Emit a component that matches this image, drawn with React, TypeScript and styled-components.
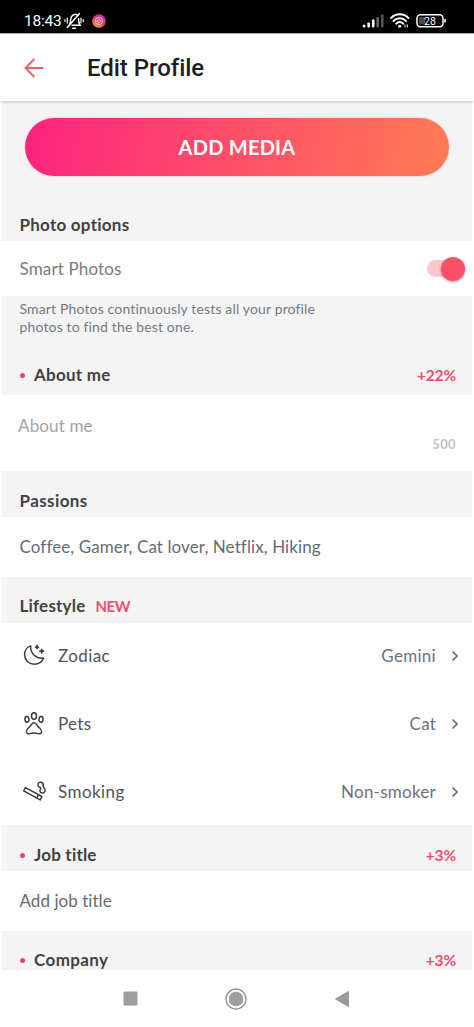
import React from 'react';
import styled, { createGlobalStyle } from 'styled-components';

const GlobalStyle = createGlobalStyle`
  * { box-sizing: border-box; }
  body {
    margin: 0;
    background: #fff;
    font-family: Lato, "Liberation Sans", sans-serif;
    font-variant-ligatures: none;
  }
`;

const Screen = styled.div`
  width: 474px;
  height: 1027px;
  display: flex;
  flex-direction: column;
  overflow: hidden;
  background: #fff;
`;

const StatusBar = styled.div`
  height: 33px;
  flex: none;
  display: flex;
  align-items: flex-start;
  justify-content: space-between;
  padding: 12px 28px 0 24px;
  background: #000;
  color: #fff;
`;

const StatusGroup = styled.div`
  display: flex;
  align-items: center;
  height: 18px;
`;

const Clock = styled.span`
  font: 400 15.5px/18px Roboto, sans-serif;
  letter-spacing: -0.25px;
  width: 40px;
  white-space: nowrap;
`;

const Header = styled.header`
  position: relative;
  height: 68px;
  flex: none;
  display: flex;
  align-items: center;
  padding: 1px 0 0 24px;
  background: #fff;
  border-top: 1px solid #aaa;
  box-shadow: 0 1px 3px rgba(0, 0, 0, 0.2);
`;

const BackArrow = styled.svg`
  width: 20px;
  height: 20px;
  margin-bottom: 1px;
  fill: none;
  stroke: #e96667;
  stroke-width: 2;
`;

const Title = styled.h1`
  margin: 0 0 0 43px;
  font: 500 24px/30px Roboto, sans-serif;
  letter-spacing: -0.04px;
  color: #1d1d1f;
`;

const Content = styled.main`
  height: 869px;
  flex: none;
  overflow: hidden;
  margin: 0 2px;
  background: #f4f4f4;
`;

const MediaArea = styled.div`
  padding: 17px 23px 0;
  height: 94px;
`;

const MediaButton = styled.button`
  display: flex;
  align-items: center;
  justify-content: center;
  width: 424px;
  height: 58px;
  border: 0;
  padding: 0;
  border-radius: 29px;
  background: linear-gradient(100deg, #fd267d 3%, #ff7854 97%);
  box-shadow: 0 0 2px rgba(253, 100, 110, 0.5);
  font: 700 20px/24px Lato, sans-serif;
  color: #fff;
`;

const Label = styled.span<{ $spacing?: number }>`
  letter-spacing: ${(p) => p.$spacing ?? 0}px;
  white-space: nowrap;
`;

const SectionHead = styled.div<{ $bottom?: number }>`
  display: flex;
  align-items: flex-end;
  height: 46px;
  padding: 0 16px ${(p) => p.$bottom ?? 5}px 17.5px;
  font-size: 17px;
  font-weight: 700;
  line-height: 22px;
  color: #424242;
`;

const Bullet = styled.i`
  width: 5px;
  height: 5px;
  margin: 0 9.5px 8px 0;
  border-radius: 50%;
  background: #e8496a;
`;

const Bonus = styled.span`
  margin-left: auto;
  font-size: 15.5px;
  letter-spacing: -0.15px;
  color: #ec4f6d;
`;

const NewTag = styled.span`
  margin-left: 10px;
  font-size: 15px;
  letter-spacing: -0.5px;
  color: #f0506e;
`;

const Panel = styled.div<{ $height: number; $color?: string }>`
  display: flex;
  align-items: center;
  justify-content: space-between;
  height: ${(p) => p.$height}px;
  margin: 0 -2px;
  padding: 0 9px 0 19.5px;
  background: #fff;
  font-size: 17px;
  line-height: 22px;
  color: ${(p) => p.$color ?? '#656b73'};
`;

const Toggle = styled.div`
  display: flex;
  align-items: center;
  justify-content: flex-end;
  width: 35px;
  height: 17px;
  border-radius: 9px;
  background: #fcc6cf;
  margin-right: 3px;
`;

const Knob = styled.span`
  flex: none;
  width: 24px;
  height: 24px;
  margin-right: -3px;
  border-radius: 50%;
  background: #fd5068;
  box-shadow: 0 1px 3px rgba(0, 0, 0, 0.35);
`;

const Hint = styled.p`
  margin: 0;
  height: 53px;
  padding: 4px 17.5px 0;
  font-size: 14px;
  line-height: 18px;
  color: #737a84;
`;

const AboutPanel = styled.div`
  display: flex;
  flex-direction: column;
  height: 76px;
  margin: 0 -2px;
  padding: 20px 18px 0 18px;
  background: #fff;
  font-size: 17px;
  line-height: 22px;
  color: #a3a3a3;
`;

const Counter = styled.span`
  align-self: flex-end;
  margin-top: -3px;
  font-size: 13px;
  font-weight: 700;
  letter-spacing: 0.35px;
  line-height: 20px;
  color: #c2c2c2;
`;

const Rows = styled.div`
  display: grid;
  grid-template-rows: 66px 69px 67px;
  height: 202px;
  margin: 0 -2px;
  padding: 0 13px 0 22px;
  background: #fff;
  font-size: 17px;
  line-height: 22px;
`;

const Row = styled.div`
  display: flex;
  align-items: center;
  color: #505459;
`;

const RowIcon = styled.svg`
  width: 24px;
  height: 24px;
  margin-right: 12px;
  overflow: visible;
  fill: none;
  stroke: #3c3c3c;
  stroke-width: 1.5;
  stroke-linecap: round;
  stroke-linejoin: round;
`;

const RowValue = styled.span<{ $spacing: number }>`
  margin-left: auto;
  margin-right: 13px;
  letter-spacing: ${(p) => p.$spacing}px;
  color: #6b717a;
`;

const NavBar = styled.nav`
  flex: 1;
  display: flex;
  align-items: center;
  justify-content: center;
  gap: 86px;
  padding-right: 2px;
  background: #fff;
`;

const MoonIcon = () => (
  <RowIcon viewBox="0 0 24 24">
    <path d="M8.7 1.900C5 3 2.600 6.800 2.600 10.700C2.600 16 7 20.300 12.300 20.300C16.500 20.300 20.200 17.800 21.500 14.100C14.500 15 8 9.500 8.700 1.900Z" />
    <path d="M15 1.700V4.500M13.600 3.100H16.400M19.700 5.300V8.900M17.900 7.100H21.500" strokeWidth="1.700" />
  </RowIcon>
);

const PawIcon = () => (
  <RowIcon viewBox="0 0 24 24">
    <ellipse cx="5" cy="7.400" rx="2" ry="2.900" transform="rotate(-6 5 7.400)" />
    <ellipse cx="12" cy="4" rx="2.500" ry="3.300" />
    <ellipse cx="19" cy="7.400" rx="2" ry="2.900" transform="rotate(6 19 7.400)" />
    <path d="M12 10.700C9.800 10.700 9.300 12.800 8 14.400C6.600 16.100 4.400 17.200 4.400 19.500C4.400 21.700 6.100 22.200 8 21.600C10.500 20.700 13.500 20.700 16 21.600C17.900 22.200 19.600 21.700 19.600 19.500C19.600 17.200 17.400 16.100 16 14.400C14.700 12.800 14.200 10.700 12 10.700Z" />
  </RowIcon>
);

const SmokeIcon = () => (
  <RowIcon viewBox="0 0 24 24">
    <path d="M3.400 7.700L19.900 16.500L18.300 19.900L1.700 10.900ZM16.500 14.900L14.900 17.900" />
    <path d="M18 11.700C17.200 10.300 19.200 9.100 18.600 7.900C18 7.100 15.900 7.200 15.900 5C15.900 2.900 17.400 2 19 2.300C20.900 2.700 21.500 4.300 21.200 5.800C21 7.300 23.100 8 23.100 10.200C23.100 12.300 21.500 13.300 20 12.900C19 12.700 18.300 12.300 18 11.700Z" />
  </RowIcon>
);

const Chevron = () => (
  <svg width="12" height="12" viewBox="0 0 12 12" fill="none" stroke="#62666c" strokeWidth="1.600">
    <path d="M3.500 1.500L8 6L3.500 10.500" />
  </svg>
);

const MutedBell = () => (
  <svg width="20" height="18" viewBox="0 0 20 18" fill="none" stroke="#fff" strokeWidth="1.500" strokeLinecap="round">
    <path d="M5.500 12.500C6.700 11 6.300 7.500 7.300 5C8.800 1.800 12.400 1.800 13.400 3.500M14.500 6.500C14.600 10 15 11.500 16 13.200H8M3.300 15.500L15.500 1.500M8.700 16.200H11.500" />
    <path d="M3.300 6V11M1 7.500V9.500M17 6V11M19.200 7.500V9.500" strokeWidth="1.200" />
  </svg>
);

const CameraBadge = () => (
  <svg width="14" height="14" viewBox="0 0 14 14">
    <defs>
      <linearGradient id="badge" x1="0.200" y1="1" x2="0.800" y2="0">
        <stop offset="0" stopColor="#fbb040" />
        <stop offset="0.450" stopColor="#ee3f62" />
        <stop offset="1" stopColor="#9a35c8" />
      </linearGradient>
    </defs>
    <circle cx="7" cy="7" r="6.800" fill="url(#badge)" />
    <rect x="3.800" y="3.800" width="6.400" height="6.400" rx="1.800" fill="none" stroke="#ffd7d7" strokeWidth="0.900" />
    <circle cx="7" cy="7" r="1.500" fill="none" stroke="#ffd7d7" strokeWidth="0.800" />
  </svg>
);

const StatusIcons = () => (
  <svg width="84" height="18" viewBox="0 0 84 18">
    <g fill="#fff">
      <rect x="0.800" y="12.800" width="2.600" height="2.600" rx="0.800" />
      <rect x="5.400" y="10.500" width="2.600" height="4.900" rx="0.800" />
      <rect x="9.900" y="7.500" width="2.600" height="7.900" rx="0.800" />
      <rect x="14.400" y="5" width="2.600" height="10.400" rx="0.800" fill="#666" />
      <rect x="19" y="2.500" width="2.600" height="12.900" rx="0.800" fill="#555" />
    </g>
    <g fill="none" stroke="#fff" strokeWidth="1.900" strokeLinecap="round">
      <path d="M29 6C34 1 41.500 1 46.500 6M31.500 9C35.200 5.400 40.300 5.400 44 9M34.200 11.700C36.300 9.700 39.200 9.700 41.300 11.700" />
    </g>
    <circle cx="37.700" cy="14.300" r="1.500" fill="#fff" />
    <path d="M43 12.500V15.500M45.300 12.500V15.500" stroke="#fff" strokeWidth="1" />
    <rect x="55" y="2.700" width="26" height="12" rx="3.500" fill="none" stroke="#fff" strokeWidth="1.500" />
    <rect x="57" y="4.900" width="6" height="7.600" rx="1.500" fill="#4a4a4a" />
    <path d="M83 7V10.500" stroke="#fff" strokeWidth="1.600" />
    <text x="68" y="12.500" fill="#fff" fontFamily="Roboto, sans-serif" fontSize="10.500" textAnchor="middle">28</text>
  </svg>
);

export default function App() {
  return (
    <Screen>
      <GlobalStyle />
      <StatusBar>
        <StatusGroup>
          <Clock>18:43</Clock>
          <MutedBell />
          <svg width="8" height="1" />
          <CameraBadge />
        </StatusGroup>
        <StatusGroup>
          <StatusIcons />
        </StatusGroup>
      </StatusBar>
      <Header>
        <BackArrow viewBox="0 0 20 20">
          <path d="M19.500 10H1.500M10.300 1L1.500 10L10.300 19" />
        </BackArrow>
        <Title>Edit Profile</Title>
      </Header>
      <Content>
        <MediaArea>
          <MediaButton><Label $spacing={0.25}>ADD MEDIA</Label></MediaButton>
        </MediaArea>
        <SectionHead><Label $spacing={0.25}>Photo options</Label></SectionHead>
        <Panel $height={55} $color="#7b7b7b">
          <Label $spacing={0.15}>Smart Photos</Label>
          <Toggle><Knob /></Toggle>
        </Panel>
        <Hint>
          <Label $spacing={0.15}>Smart Photos continuously tests all your profile<br />photos to find the best one.</Label>
        </Hint>
        <SectionHead $bottom={9}>
          <Bullet /><Label $spacing={0.25}>About me</Label><Bonus>+22%</Bonus>
        </SectionHead>
        <AboutPanel>
          <Label $spacing={0.15}>About me</Label>
          <Counter>500</Counter>
        </AboutPanel>
        <SectionHead><Label $spacing={0.4}>Passions</Label></SectionHead>
        <Panel $height={60}><Label $spacing={0.1}>Coffee, Gamer, Cat lover, Netflix, Hiking</Label></Panel>
        <SectionHead $bottom={6}><Label $spacing={0.2}>Lifestyle</Label><NewTag>NEW</NewTag></SectionHead>
        <Rows>
          <Row><MoonIcon /><Label $spacing={0.4}>Zodiac</Label><RowValue $spacing={0.3}>Gemini</RowValue><Chevron /></Row>
          <Row><PawIcon /><Label $spacing={0.3}>Pets</Label><RowValue $spacing={0.2}>Cat</RowValue><Chevron /></Row>
          <Row><SmokeIcon /><Label $spacing={0.45}>Smoking</Label><RowValue $spacing={0.25}>Non-smoker</RowValue><Chevron /></Row>
        </Rows>
        <SectionHead><Bullet /><Label $spacing={0.2}>Job title</Label><Bonus>+3%</Bonus></SectionHead>
        <Panel $height={60}><Label $spacing={0.05}>Add job title</Label></Panel>
        <SectionHead $bottom={6}><Bullet /><Label $spacing={0.4}>Company</Label><Bonus>+3%</Bonus></SectionHead>
      </Content>
      <NavBar>
        <svg width="15" height="15"><rect x="0.500" y="0.500" width="14" height="14" rx="1" fill="#9e9e9e" /></svg>
        <svg width="24" height="24" fill="none">
          <circle cx="12" cy="12" r="10" stroke="#9a9a9a" strokeWidth="1.500" />
          <circle cx="12" cy="12" r="7.300" fill="#9e9e9e" />
        </svg>
        <svg width="16" height="18"><path d="M14.500 1.500V16.500L1.500 9Z" fill="#9a9a9a" stroke="#9a9a9a" strokeLinejoin="round" /></svg>
      </NavBar>
    </Screen>
  );
}
